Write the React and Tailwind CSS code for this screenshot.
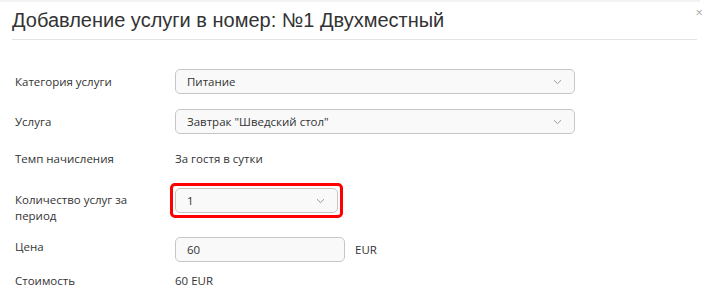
import React from "react";

const Chevron = () => (
  <svg width="9" height="6" viewBox="0 0 9 6" className="shrink-0">
    <path d="M1 1.2 L4.5 4.6 L8 1.2" fill="none" stroke="#9a9a9a" strokeWidth="1" />
  </svg>
);

const Select = ({ value, className }) => (
  <div
    className={`flex h-[25px] items-center justify-between rounded-[5px] border border-[#c6c6c6] bg-[#f9f9f9] pl-[11px] pr-[12px] text-[11.5px] text-[#333] ${className}`}
  >
    <span>{value}</span>
    <Chevron />
  </div>
);

const Label = ({ children, className = "" }) => (
  <div className={`w-[160px] shrink-0 pr-[20px] text-[11.5px] leading-[16px] text-[#333] ${className}`}>
    {children}
  </div>
);

export default function App() {
  return (
    <div className="h-[300px] w-[710px] overflow-hidden bg-white font-['Open_Sans',sans-serif]">
      <div className="h-[2px] w-[700px] bg-[#f3f3f3]" />
      <div className="relative px-[12px]">
        <h1 className="pt-[4px] font-['Liberation_Sans',Arial,sans-serif] text-[20px] leading-[28px] text-[#333]">
          Добавление услуги в номер: №1 Двухместный
        </h1>
        <span className="absolute right-[7px] top-[2px] text-[13px] leading-[16px] text-[#aaa]">×</span>
        <div className="mt-[5px] h-px w-[685px] bg-[#e3e3e3]" />
      </div>

      <div className="px-[15px]">
        <div className="mt-[29px] flex items-center">
          <Label>Категория услуги</Label>
          <Select value="Питание" className="w-[400px]" />
        </div>

        <div className="mt-[15px] flex items-center">
          <Label>Услуга</Label>
          <Select value='Завтрак "Шведский стол"' className="w-[400px]" />
        </div>

        <div className="mt-[16px] flex h-[18px] items-center">
          <Label>Темп начисления</Label>
          <span className="text-[11.5px] text-[#333]">За гостя в сутки</span>
        </div>

        <div className="mt-[15px] flex items-start">
          <Label className="pt-[9px]">Количество услуг за период</Label>
          <div className="-ml-[5px] rounded-[5px] border-[3px] border-[#ff0000] p-[2px]">
            <Select value="1" className="w-[163px]" />
          </div>
        </div>

        <div className="mt-[13px] flex items-start">
          <Label className="pt-[2px]">Цена</Label>
          <div className="flex h-[25px] w-[170px] items-center rounded-[5px] border border-[#c6c6c6] bg-[#f9f9f9] pl-[11px] text-[11.5px] text-[#333]">
            60
          </div>
          <span className="ml-[10px] pt-[4px] text-[11.5px] text-[#333]">EUR</span>
        </div>

        <div className="mt-[10px] flex items-center">
          <Label>Стоимость</Label>
          <span className="text-[11.5px] text-[#333]">60 EUR</span>
        </div>
      </div>
    </div>
  );
}
